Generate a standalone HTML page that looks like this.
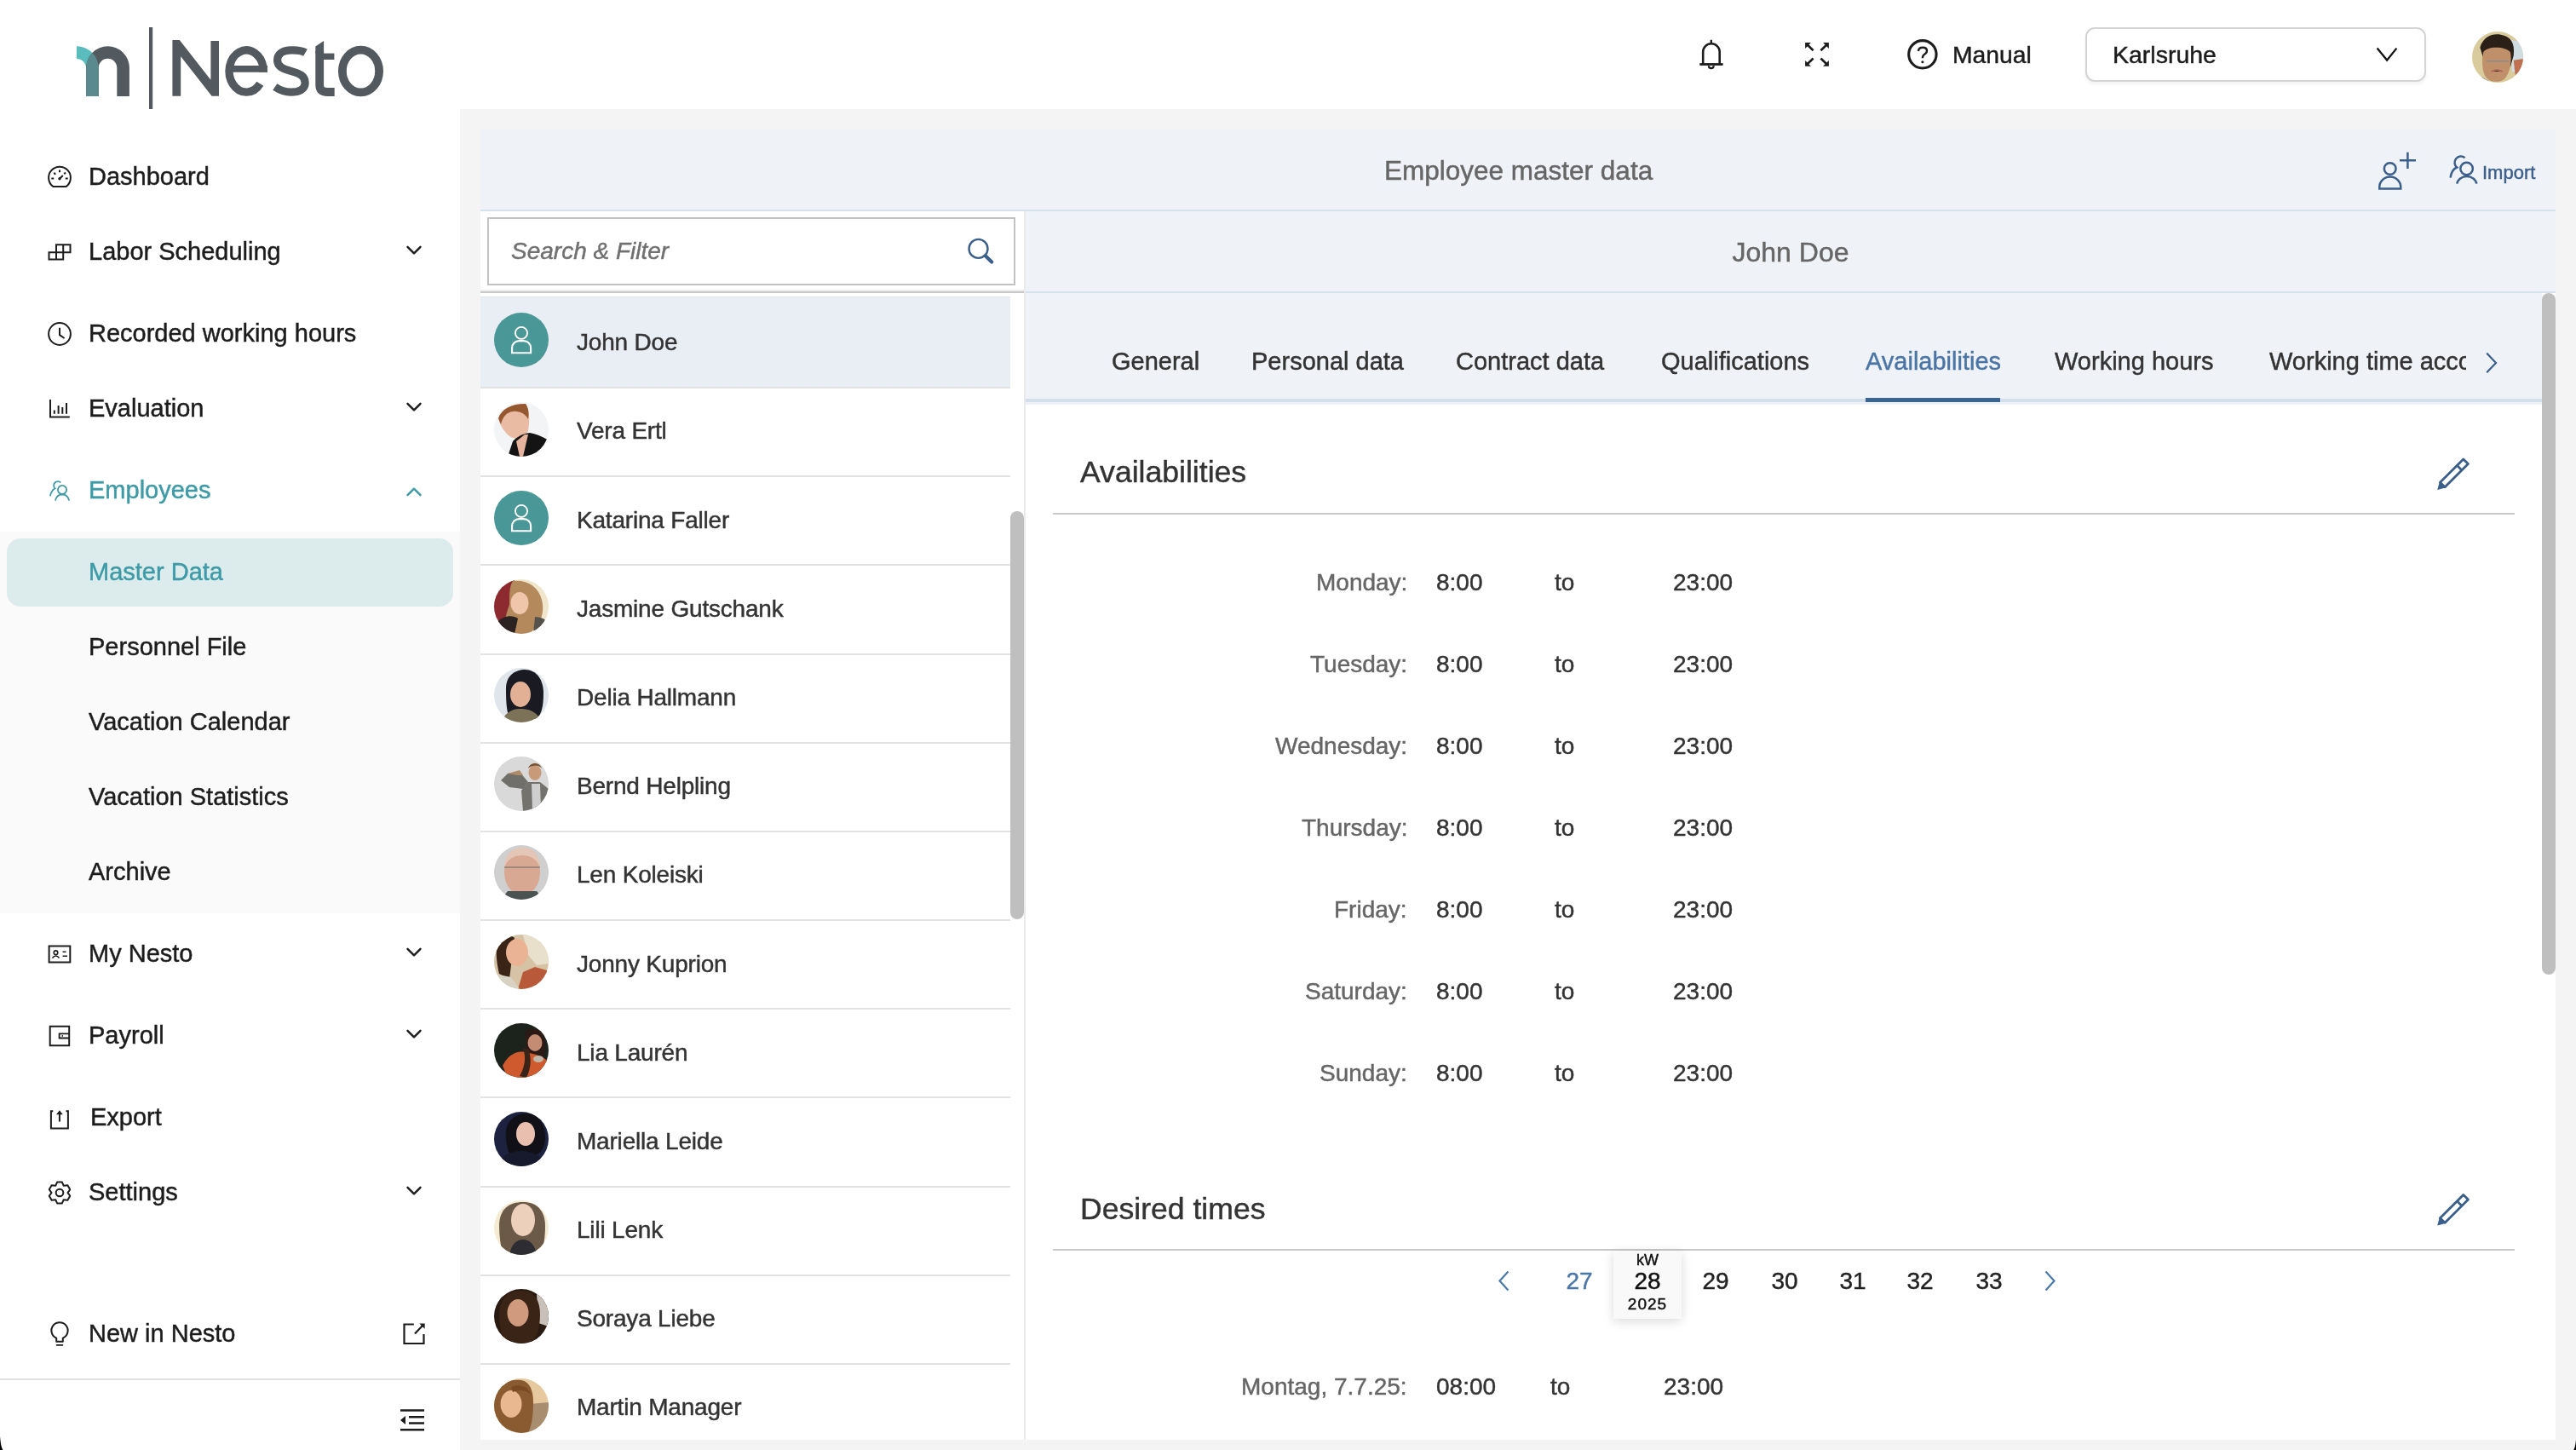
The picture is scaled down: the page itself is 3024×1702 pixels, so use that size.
<!DOCTYPE html>
<html><head><meta charset="utf-8"><title>Nesto</title>
<style>
html,body{margin:0;padding:0;}
body{width:3024px;height:1702px;position:relative;overflow:hidden;background:#fff;font-family:"Liberation Sans",sans-serif;}
.t{position:absolute;white-space:nowrap;will-change:transform;-webkit-text-stroke:0.45px currentColor;}
.r{position:absolute;}
svg.r{overflow:visible;}
</style></head><body>
<div class="r" style="left:540px;top:128px;width:2484px;height:1574px;background:#f4f4f4;"></div>
<div class="r" style="left:564px;top:152px;width:2436px;height:1538px;background:#ffffff;"></div>
<div class="r" style="left:564px;top:152px;width:2436px;height:94px;background:#eff2f7;"></div>
<div class="r" style="left:564px;top:246px;width:2436px;height:2px;background:#d6e1ee;"></div>
<div class="r" style="left:1204px;top:248px;width:1796px;height:94px;background:#eff2f7;"></div>
<div class="r" style="left:1204px;top:342px;width:1796px;height:2px;background:#d6e1ee;"></div>
<div class="r" style="left:1204px;top:344px;width:1780px;height:124px;background:#eff2f7;"></div>
<div class="r" style="left:1204px;top:468px;width:1780px;height:4px;background:#d4dfec;"></div>
<div class="r" style="left:1204px;top:472px;width:1780px;height:3px;background:#eef2f7;"></div>
<div class="r" style="left:1202px;top:248px;width:2px;height:1442px;background:#eaeaea;"></div>
<div class="r" style="left:0px;top:624px;width:540px;height:448px;background:#fafafa;"></div>
<div class="r" style="left:8px;top:632px;width:524px;height:80px;background:#dcecec;border-radius:16px;"></div>
<div class="r" style="left:0px;top:1618px;width:540px;height:2px;background:#e2e2e2;"></div>
<svg class="r" style="left:0px;top:0px;" width="540" height="128" viewBox="0 0 540 128">
<defs><clipPath id="nclip"><path d="M101.1 112.9V79.6A25.4 25.4 0 0 1 151.9 79.6V112.9H137.3V79.6A10.8 10.8 0 0 0 115.7 79.6V112.9Z"/></clipPath></defs>
<path fill="#5bbcbd" d="M89.9 54.2A25.8 25.8 0 0 1 115.7 80V112.9H101.1V80A11.2 11.2 0 0 0 89.9 68.9Z"/>
<path fill="#535a5f" d="M101.1 112.9V79.6A25.4 25.4 0 0 1 151.9 79.6V112.9H137.3V79.6A10.8 10.8 0 0 0 115.7 79.6V112.9Z"/>
<path fill="#5a8a8e" clip-path="url(#nclip)" d="M89.9 54.2A25.8 25.8 0 0 1 115.7 80V112.9H101.1V80A11.2 11.2 0 0 0 89.9 68.9Z"/>
<rect x="175" y="32" width="4.2" height="96" fill="#535a5f"/>
</svg>
<svg class="r" style="left:0px;top:0px;" width="540" height="128" viewBox="0 0 540 128"><path fill="#535a5f" d="M202.4 112.8V47.1H210.8L247.4 93.8V47.9H257V112.8H248.6L212.2 66.3V112.8Z"/><path fill="none" stroke="#535a5f" stroke-width="9.4" d="M309 79.5A20.1 24.6 0 1 0 305.3 98.2"/><path fill="none" stroke="#535a5f" stroke-width="7.8" d="M269 80.8H313.8"/><path fill="#535a5f" d="M309 76.9H313.8V84.7H304Z"/><path fill="none" stroke="#535a5f" stroke-width="9.2" d="M358.5 61.8C353 58.5 347 58.8 342 58.8C332 58.8 325.6 63.5 325.6 70.8C325.6 78.5 333 81.2 342 83.6C351.5 86.1 358.2 89.2 358.2 97.2C358.2 104.8 351 108.2 341.5 108.2C334.5 108.2 328.5 105.8 322.8 102"/><path fill="#535a5f" d="M370.3 54.6L380.1 48V62.6H370.3Z"/><path fill="none" stroke="#535a5f" stroke-width="9.8" d="M375.2 60V99.5C375.2 105.8 378.6 108 384.5 108H392.7"/><path fill="none" stroke="#535a5f" stroke-width="7.4" d="M375 66.3H392.4"/><ellipse cx="423.5" cy="83.5" rx="21.6" ry="24.9" fill="none" stroke="#535a5f" stroke-width="9.8"/></svg>
<div class="t" style="left:104.00px;top:193.45px;font-size:29px;line-height:29px;color:#1c1c1c;">Dashboard</div>
<div class="t" style="left:104.00px;top:280.95px;font-size:29px;line-height:29px;color:#1c1c1c;">Labor Scheduling</div>
<div class="t" style="left:104.00px;top:377.45px;font-size:29px;line-height:29px;color:#1c1c1c;">Recorded working hours</div>
<div class="t" style="left:104.00px;top:465.45px;font-size:29px;line-height:29px;color:#1c1c1c;">Evaluation</div>
<div class="t" style="left:104.00px;top:561.45px;font-size:29px;line-height:29px;color:#3d9aa6;">Employees</div>
<div class="t" style="left:104.00px;top:657.45px;font-size:29px;line-height:29px;color:#3d9aa6;">Master Data</div>
<div class="t" style="left:104.00px;top:745.45px;font-size:29px;line-height:29px;color:#1c1c1c;">Personnel File</div>
<div class="t" style="left:104.00px;top:833.45px;font-size:29px;line-height:29px;color:#1c1c1c;">Vacation Calendar</div>
<div class="t" style="left:104.00px;top:921.45px;font-size:29px;line-height:29px;color:#1c1c1c;">Vacation Statistics</div>
<div class="t" style="left:104.00px;top:1009.45px;font-size:29px;line-height:29px;color:#1c1c1c;">Archive</div>
<div class="t" style="left:104.00px;top:1105.45px;font-size:29px;line-height:29px;color:#1c1c1c;">My Nesto</div>
<div class="t" style="left:104.00px;top:1201.45px;font-size:29px;line-height:29px;color:#1c1c1c;">Payroll</div>
<div class="t" style="left:105.50px;top:1297.45px;font-size:29px;line-height:29px;color:#1c1c1c;">Export</div>
<div class="t" style="left:104.00px;top:1385.25px;font-size:29px;line-height:29px;color:#1c1c1c;">Settings</div>
<div class="t" style="left:104.00px;top:1551.45px;font-size:29px;line-height:29px;color:#1c1c1c;">New in Nesto</div>
<svg class="r" style="left:477px;top:288px;" width="18" height="12" viewBox="0 0 18 12"><path d="M1.5 1.8L9 9.3L16.5 1.8" fill="none" stroke="#1c1c1c" stroke-width="2.4" stroke-linecap="round" stroke-linejoin="round"/></svg>
<svg class="r" style="left:477px;top:472px;" width="18" height="12" viewBox="0 0 18 12"><path d="M1.5 1.8L9 9.3L16.5 1.8" fill="none" stroke="#1c1c1c" stroke-width="2.4" stroke-linecap="round" stroke-linejoin="round"/></svg>
<svg class="r" style="left:477px;top:1112px;" width="18" height="12" viewBox="0 0 18 12"><path d="M1.5 1.8L9 9.3L16.5 1.8" fill="none" stroke="#1c1c1c" stroke-width="2.4" stroke-linecap="round" stroke-linejoin="round"/></svg>
<svg class="r" style="left:477px;top:1208px;" width="18" height="12" viewBox="0 0 18 12"><path d="M1.5 1.8L9 9.3L16.5 1.8" fill="none" stroke="#1c1c1c" stroke-width="2.4" stroke-linecap="round" stroke-linejoin="round"/></svg>
<svg class="r" style="left:477px;top:1392px;" width="18" height="12" viewBox="0 0 18 12"><path d="M1.5 1.8L9 9.3L16.5 1.8" fill="none" stroke="#1c1c1c" stroke-width="2.4" stroke-linecap="round" stroke-linejoin="round"/></svg>
<svg class="r" style="left:477px;top:571px;" width="18" height="12" viewBox="0 0 18 12"><path d="M1.5 10.2L9 2.7L16.5 10.2" fill="none" stroke="#3d9aa6" stroke-width="2.4" stroke-linecap="round" stroke-linejoin="round"/></svg>
<div class="t" style="left:2291.50px;top:50.24px;font-size:28.3px;line-height:28.3px;color:#1c1c1c;">Manual</div>
<div class="r" style="left:2448px;top:32px;width:400px;height:64px;background:#fff;box-sizing:border-box;border:2px solid #d4d4d4;border-radius:11px;box-shadow:0 3px 4px rgba(0,0,0,0.05);"></div>
<div class="t" style="left:2480.00px;top:50.47px;font-size:28.5px;line-height:28.5px;color:#1c1c1c;">Karlsruhe</div>
<div class="t" style="left:1625.00px;top:184.93px;font-size:31.5px;line-height:31.5px;color:#666;">Employee master data</div>
<div class="t" style="left:2914.00px;top:192.07px;font-size:22px;line-height:22px;color:#3b5f8b;">Import</div>
<div class="r" style="left:572px;top:255px;width:620px;height:80px;background:#fff;box-sizing:border-box;border:2.5px solid #c2c2c2;"></div>
<div class="t" style="left:600.00px;top:281.29px;font-size:28px;line-height:28px;color:#707070;font-style:italic;">Search &amp; Filter</div>
<div class="r" style="left:564px;top:340px;width:638px;height:2px;background:#ececec;"></div>
<div class="r" style="left:564px;top:342px;width:638px;height:2px;background:#c8c8c8;"></div>
<div class="r" style="left:564px;top:348px;width:622px;height:1px;background:#e6e6e6;"></div>
<div class="t" style="left:1102.00px;width:2000px;text-align:center;top:280.41px;font-size:32px;line-height:32px;color:#666;">John Doe</div>
<div class="r" style="left:1204px;top:380px;width:1691px;height:80px;overflow:hidden;">
<div class="t" style="left:100.50px;top:29.95px;font-size:29px;line-height:29px;color:#333;white-space:nowrap;">General</div>
<div class="t" style="left:264.50px;top:29.95px;font-size:29px;line-height:29px;color:#333;white-space:nowrap;">Personal data</div>
<div class="t" style="left:504.50px;top:29.95px;font-size:29px;line-height:29px;color:#333;white-space:nowrap;">Contract data</div>
<div class="t" style="left:746.00px;top:29.95px;font-size:29px;line-height:29px;color:#333;white-space:nowrap;">Qualifications</div>
<div class="t" style="left:985.50px;top:29.95px;font-size:29px;line-height:29px;color:#4a75a5;white-space:nowrap;">Availabilities</div>
<div class="t" style="left:1208.10px;top:29.95px;font-size:29px;line-height:29px;color:#333;white-space:nowrap;">Working hours</div>
<div class="t" style="left:1459.50px;top:29.95px;font-size:29px;line-height:29px;color:#333;white-space:nowrap;">Working time accounts</div>
</div>
<div class="r" style="left:2190px;top:467px;width:158px;height:5px;background:#3b6591;"></div>
<div class="r" style="left:564px;top:349px;width:622px;height:105px;background:#e9eef5;"></div>
<div class="r" style="left:564px;top:454px;width:622px;height:2px;background:#e2e2e2;"></div>
<div class="t" style="left:676.50px;top:388.29px;font-size:28px;line-height:28px;color:#333;letter-spacing:-0.2px;">John Doe</div>
<div class="r" style="left:564px;top:558px;width:622px;height:2px;background:#e2e2e2;"></div>
<div class="t" style="left:676.50px;top:492.47px;font-size:28px;line-height:28px;color:#333;letter-spacing:-0.2px;">Vera Ertl</div>
<div class="r" style="left:564px;top:662px;width:622px;height:2px;background:#e2e2e2;"></div>
<div class="t" style="left:676.50px;top:596.65px;font-size:28px;line-height:28px;color:#333;letter-spacing:-0.2px;">Katarina Faller</div>
<div class="r" style="left:564px;top:767px;width:622px;height:2px;background:#e2e2e2;"></div>
<div class="t" style="left:676.50px;top:700.83px;font-size:28px;line-height:28px;color:#333;letter-spacing:-0.2px;">Jasmine Gutschank</div>
<div class="r" style="left:564px;top:871px;width:622px;height:2px;background:#e2e2e2;"></div>
<div class="t" style="left:676.50px;top:805.01px;font-size:28px;line-height:28px;color:#333;letter-spacing:-0.2px;">Delia Hallmann</div>
<div class="r" style="left:564px;top:975px;width:622px;height:2px;background:#e2e2e2;"></div>
<div class="t" style="left:676.50px;top:909.19px;font-size:28px;line-height:28px;color:#333;letter-spacing:-0.2px;">Bernd Helpling</div>
<div class="r" style="left:564px;top:1079px;width:622px;height:2px;background:#e2e2e2;"></div>
<div class="t" style="left:676.50px;top:1013.37px;font-size:28px;line-height:28px;color:#333;letter-spacing:-0.2px;">Len Koleiski</div>
<div class="r" style="left:564px;top:1183px;width:622px;height:2px;background:#e2e2e2;"></div>
<div class="t" style="left:676.50px;top:1117.55px;font-size:28px;line-height:28px;color:#333;letter-spacing:-0.2px;">Jonny Kuprion</div>
<div class="r" style="left:564px;top:1287px;width:622px;height:2px;background:#e2e2e2;"></div>
<div class="t" style="left:676.50px;top:1221.73px;font-size:28px;line-height:28px;color:#333;letter-spacing:-0.2px;">Lia Laur&eacute;n</div>
<div class="r" style="left:564px;top:1392px;width:622px;height:2px;background:#e2e2e2;"></div>
<div class="t" style="left:676.50px;top:1325.91px;font-size:28px;line-height:28px;color:#333;letter-spacing:-0.2px;">Mariella Leide</div>
<div class="r" style="left:564px;top:1496px;width:622px;height:2px;background:#e2e2e2;"></div>
<div class="t" style="left:676.50px;top:1430.09px;font-size:28px;line-height:28px;color:#333;letter-spacing:-0.2px;">Lili Lenk</div>
<div class="r" style="left:564px;top:1600px;width:622px;height:2px;background:#e2e2e2;"></div>
<div class="t" style="left:676.50px;top:1534.27px;font-size:28px;line-height:28px;color:#333;letter-spacing:-0.2px;">Soraya Liebe</div>
<div class="t" style="left:676.50px;top:1638.45px;font-size:28px;line-height:28px;color:#333;letter-spacing:-0.2px;">Martin Manager</div>
<div class="r" style="left:1186px;top:600px;width:16px;height:479px;background:#bfbfbf;border-radius:8px;"></div>
<div class="t" style="left:1267.50px;top:537.36px;font-size:35.6px;line-height:35.6px;color:#333;">Availabilities</div>
<div class="r" style="left:1236px;top:602px;width:1716px;height:2px;background:#c8c8c8;"></div>
<div class="t" style="right:1372.00px;top:669.69px;font-size:28px;line-height:28px;color:#666;">Monday:</div>
<div class="t" style="left:1685.50px;top:669.69px;font-size:28px;line-height:28px;color:#333;">8:00</div>
<div class="t" style="left:1824.70px;top:669.69px;font-size:28px;line-height:28px;color:#333;">to</div>
<div class="t" style="left:1963.50px;top:669.69px;font-size:28px;line-height:28px;color:#333;">23:00</div>
<div class="t" style="right:1372.00px;top:765.69px;font-size:28px;line-height:28px;color:#666;">Tuesday:</div>
<div class="t" style="left:1685.50px;top:765.69px;font-size:28px;line-height:28px;color:#333;">8:00</div>
<div class="t" style="left:1824.70px;top:765.69px;font-size:28px;line-height:28px;color:#333;">to</div>
<div class="t" style="left:1963.50px;top:765.69px;font-size:28px;line-height:28px;color:#333;">23:00</div>
<div class="t" style="right:1372.00px;top:861.69px;font-size:28px;line-height:28px;color:#666;">Wednesday:</div>
<div class="t" style="left:1685.50px;top:861.69px;font-size:28px;line-height:28px;color:#333;">8:00</div>
<div class="t" style="left:1824.70px;top:861.69px;font-size:28px;line-height:28px;color:#333;">to</div>
<div class="t" style="left:1963.50px;top:861.69px;font-size:28px;line-height:28px;color:#333;">23:00</div>
<div class="t" style="right:1372.00px;top:957.69px;font-size:28px;line-height:28px;color:#666;">Thursday:</div>
<div class="t" style="left:1685.50px;top:957.69px;font-size:28px;line-height:28px;color:#333;">8:00</div>
<div class="t" style="left:1824.70px;top:957.69px;font-size:28px;line-height:28px;color:#333;">to</div>
<div class="t" style="left:1963.50px;top:957.69px;font-size:28px;line-height:28px;color:#333;">23:00</div>
<div class="t" style="right:1372.00px;top:1053.69px;font-size:28px;line-height:28px;color:#666;">Friday:</div>
<div class="t" style="left:1685.50px;top:1053.69px;font-size:28px;line-height:28px;color:#333;">8:00</div>
<div class="t" style="left:1824.70px;top:1053.69px;font-size:28px;line-height:28px;color:#333;">to</div>
<div class="t" style="left:1963.50px;top:1053.69px;font-size:28px;line-height:28px;color:#333;">23:00</div>
<div class="t" style="right:1372.00px;top:1149.69px;font-size:28px;line-height:28px;color:#666;">Saturday:</div>
<div class="t" style="left:1685.50px;top:1149.69px;font-size:28px;line-height:28px;color:#333;">8:00</div>
<div class="t" style="left:1824.70px;top:1149.69px;font-size:28px;line-height:28px;color:#333;">to</div>
<div class="t" style="left:1963.50px;top:1149.69px;font-size:28px;line-height:28px;color:#333;">23:00</div>
<div class="t" style="right:1372.00px;top:1245.69px;font-size:28px;line-height:28px;color:#666;">Sunday:</div>
<div class="t" style="left:1685.50px;top:1245.69px;font-size:28px;line-height:28px;color:#333;">8:00</div>
<div class="t" style="left:1824.70px;top:1245.69px;font-size:28px;line-height:28px;color:#333;">to</div>
<div class="t" style="left:1963.50px;top:1245.69px;font-size:28px;line-height:28px;color:#333;">23:00</div>
<div class="t" style="left:1267.50px;top:1401.86px;font-size:35.6px;line-height:35.6px;color:#333;">Desired times</div>
<div class="r" style="left:1236px;top:1466px;width:1716px;height:2px;background:#c8c8c8;"></div>
<div class="r" style="left:1894px;top:1468px;width:80px;height:80px;background:#f9f9f9;box-shadow:0 3px 12px rgba(0,0,0,0.15);"></div>
<div class="t" style="left:933.80px;width:2000px;text-align:center;top:1470.36px;font-size:18px;line-height:18px;color:#111;">kW</div>
<div class="t" style="left:934.00px;width:2000px;text-align:center;top:1489.89px;font-size:28px;line-height:28px;color:#111;">28</div>
<div class="t" style="left:934.00px;width:2000px;text-align:center;top:1520.91px;font-size:19px;line-height:19px;color:#111;letter-spacing:1px;">2025</div>
<div class="t" style="left:854.40px;width:2000px;text-align:center;top:1490.29px;font-size:28px;line-height:28px;color:#4a78a8;">27</div>
<div class="t" style="left:1014.00px;width:2000px;text-align:center;top:1490.29px;font-size:28px;line-height:28px;color:#222;">29</div>
<div class="t" style="left:1094.50px;width:2000px;text-align:center;top:1490.29px;font-size:28px;line-height:28px;color:#222;">30</div>
<div class="t" style="left:1174.50px;width:2000px;text-align:center;top:1490.29px;font-size:28px;line-height:28px;color:#222;">31</div>
<div class="t" style="left:1253.50px;width:2000px;text-align:center;top:1490.29px;font-size:28px;line-height:28px;color:#222;">32</div>
<div class="t" style="left:1334.50px;width:2000px;text-align:center;top:1490.29px;font-size:28px;line-height:28px;color:#222;">33</div>
<svg class="r" style="left:1757px;top:1490px;" width="17" height="27" viewBox="0 0 17 27"><path d="M13.5 2.5L3.5 13.5L13.5 24.5" fill="none" stroke="#4a78a8" stroke-width="2.2"/></svg>
<svg class="r" style="left:2398px;top:1490px;" width="17" height="27" viewBox="0 0 17 27"><path d="M3.5 2.5L13.5 13.5L3.5 24.5" fill="none" stroke="#4a78a8" stroke-width="2.2"/></svg>
<div class="t" style="right:1372.00px;top:1613.99px;font-size:28px;line-height:28px;color:#666;">Montag, 7.7.25:</div>
<div class="t" style="left:1685.50px;top:1613.99px;font-size:28px;line-height:28px;color:#333;">08:00</div>
<div class="t" style="left:1819.50px;top:1613.99px;font-size:28px;line-height:28px;color:#333;">to</div>
<div class="t" style="left:1953.00px;top:1613.99px;font-size:28px;line-height:28px;color:#333;">23:00</div>
<div class="r" style="left:2984px;top:344px;width:16px;height:1346px;background:#ffffff;"></div>
<div class="r" style="left:2984px;top:344px;width:16px;height:800px;background:#bfbfbf;border-radius:8px;"></div>
<svg class="r" style="left:0;top:0;" width="3024" height="1702" viewBox="0 0 3024 1702"><path d="M62.3 218.9 A12.9 12.9 0 1 1 77.7 218.9 Z" fill="none" stroke="#1c1c1c" stroke-width="2.0" stroke-linejoin="round"/><path d="M70 199.5V202.3 M60.3 209.5H63.2 M76.8 209.5H79.7 M63.3 202.8L65.2 204.7 M77 202.5L75.3 204.2 M70 209.8L73.8 206" fill="none" stroke="#1c1c1c" stroke-width="2.0" /><circle cx="70" cy="209.8" r="1.7" fill="#1c1c1c"/><path d="M66 287.3H82.5V296.3H66Z M74.2 287.3V304.5 M57.5 296.3H74.2V304.5H57.5Z M66 296.3V304.5" fill="none" stroke="#1c1c1c" stroke-width="2.0" /><circle cx="70" cy="392" r="12.9" fill="none" stroke="#1c1c1c" stroke-width="2"/><path d="M70 384.8V393.2L75.6 397" fill="none" stroke="#1c1c1c" stroke-width="2.0" /><path d="M59 469V489.6H81.8" fill="none" stroke="#1c1c1c" stroke-width="2.0" /><path d="M63.8 481.5V485.8 M68.6 476V485.8 M73.3 478V485.8 M78 473V485.8" fill="none" stroke="#1c1c1c" stroke-width="2.0" /><path d="M71.3 566.4 A4.7 4.7 0 1 0 64.6 573.3 Q60.4 575.8 58.9 582.2" fill="none" stroke="#3d9aa6" stroke-width="1.8" /><circle cx="73" cy="574.9" r="5.1" fill="none" stroke="#3d9aa6" stroke-width="1.8"/><path d="M64.9 587.6 Q66.5 580.5 73 580.3 Q79.5 580.5 81.2 587.6" fill="none" stroke="#3d9aa6" stroke-width="1.8" /><path d="M57.6 1110.4H82.3V1129.4H57.6Z" fill="none" stroke="#1c1c1c" stroke-width="2.0" /><circle cx="65.5" cy="1118.2" r="2.3" fill="none" stroke="#1c1c1c" stroke-width="1.6"/><path d="M61.4 1124.6 Q65.5 1119.5 69.6 1124.6" fill="none" stroke="#1c1c1c" stroke-width="1.6" /><path d="M73.6 1117.2H77.5 M73.6 1122.2H79" fill="none" stroke="#1c1c1c" stroke-width="1.6" /><path d="M58.7 1204.7H81.2V1227.3H58.7Z" fill="none" stroke="#1c1c1c" stroke-width="2.0" /><path d="M81.2 1213.3H69.6V1218.5H81.2" fill="none" stroke="#1c1c1c" stroke-width="1.8" /><circle cx="73.3" cy="1215.9" r="0.9" fill="#1c1c1c"/><path d="M62.3 1304.2H59.9V1324.4H79.9V1304.2H77.5" fill="none" stroke="#1c1c1c" stroke-width="2.0" /><path d="M69.9 1316.6V1305.5" fill="none" stroke="#1c1c1c" stroke-width="2.0" /><path d="M66 1308.3L69.9 1303.2L73.8 1308.3Z" fill="#1c1c1c"/><path d="M65.35 1391.60 L67.12 1387.53 L72.88 1387.53 L74.65 1391.60 L74.94 1391.77 L79.36 1391.27 L82.24 1396.26 L79.60 1399.83 L79.60 1400.17 L82.24 1403.74 L79.36 1408.73 L74.94 1408.23 L74.65 1408.40 L72.88 1412.47 L67.12 1412.47 L65.35 1408.40 L65.06 1408.23 L60.64 1408.73 L57.76 1403.74 L60.40 1400.17 L60.40 1399.83 L57.76 1396.26 L60.64 1391.27 L65.06 1391.77Z" fill="none" stroke="#1c1c1c" stroke-width="2.0" stroke-linejoin="round"/><circle cx="70" cy="1400" r="4.3" fill="none" stroke="#1c1c1c" stroke-width="2"/><path d="M66.2 1574.7V1570.6 A9.6 9.6 0 1 1 73.8 1570.6 V1574.7Z" fill="none" stroke="#1c1c1c" stroke-width="2.0" stroke-linejoin="round"/><path d="M66.6 1578.8H73.4" fill="none" stroke="#1c1c1c" stroke-width="1.8" stroke-linecap="round"/><path d="M485.8 1554.5H474.5V1577H497.5V1566" fill="none" stroke="#1c1c1c" stroke-width="2.2" /><path d="M487 1565.5L496 1556" fill="none" stroke="#1c1c1c" stroke-width="2.2" /><path d="M492.3 1553.4H498.6V1559.7Z" fill="#1c1c1c"/><path d="M470 1655.5H498 M480 1663.3H498 M480 1670.5H498 M470 1678.3H498" fill="none" stroke="#1c1c1c" stroke-width="2.4" /><path d="M470 1667L476 1662V1672Z" fill="#1c1c1c"/><path d="M1999.2 75V61 A9.75 9.75 0 0 1 2018.7 61V75" fill="none" stroke="#1c1c1c" stroke-width="2.6" /><path d="M1995.3 75.5H2022.6" fill="none" stroke="#1c1c1c" stroke-width="2.8" /><path d="M2008.8 46.8V50.5" fill="none" stroke="#1c1c1c" stroke-width="2.4" /><path d="M2005.9 77.2A2.9 2.9 0 0 0 2011.7 77.2" fill="none" stroke="#1c1c1c" stroke-width="2.3" /><path d="M2121.6 52.5L2128.6 59.3" fill="none" stroke="#1c1c1c" stroke-width="2.6" /><path d="M2119.1 50H2125.9L2119.1 56.9Z" fill="#1c1c1c"/><path d="M2144.4 52.5L2137.4 59.3" fill="none" stroke="#1c1c1c" stroke-width="2.6" /><path d="M2146.9 50H2140.1L2146.9 56.9Z" fill="#1c1c1c"/><path d="M2121.6 75.3L2128.6 68.5" fill="none" stroke="#1c1c1c" stroke-width="2.6" /><path d="M2119.1 77.8H2125.9L2119.1 70.89999999999999Z" fill="#1c1c1c"/><path d="M2144.4 75.3L2137.4 68.5" fill="none" stroke="#1c1c1c" stroke-width="2.6" /><path d="M2146.9 77.8H2140.1L2146.9 70.89999999999999Z" fill="#1c1c1c"/><circle cx="2256.9" cy="63.8" r="16.2" fill="none" stroke="#1c1c1c" stroke-width="3.1"/><path d="M2251.9 60 Q2252.4 55.7 2257.2 55.7 Q2262 55.7 2262 59.6 Q2262 62.4 2259.2 63.8 Q2256.9 65 2256.9 68.3" fill="none" stroke="#1c1c1c" stroke-width="2.4" /><circle cx="2256.9" cy="72.8" r="1.55" fill="#1c1c1c"/><path d="M2790.6 56.6L2802.1 70.6L2813.4 56.6" fill="none" stroke="#111" stroke-width="2.3" /><circle cx="1148.5" cy="291.9" r="11" fill="none" stroke="#3b5f8b" stroke-width="2.4"/><path d="M1156.8 300.2L1164.2 307.6" fill="none" stroke="#3b5f8b" stroke-width="4.2" stroke-linecap="round"/><circle cx="2805.7" cy="198" r="6.85" fill="none" stroke="#3b5f8b" stroke-width="2.5"/><path d="M2793.25 221.5V219.6A12.5 12 0 0 1 2818.25 219.6V221.5Z" fill="none" stroke="#3b5f8b" stroke-width="2.5" /><path d="M2826.4 178.7V198 M2817 188.2H2836" fill="none" stroke="#3b5f8b" stroke-width="2.5" /><circle cx="2895.6" cy="198.1" r="7.25" fill="none" stroke="#3b5f8b" stroke-width="2.5"/><path d="M2884.3 215.6 A11.6 10 0 0 1 2907.3 215.6" fill="none" stroke="#3b5f8b" stroke-width="2.5" /><path d="M2893.5 185.2 A6.6 6.6 0 1 0 2884.2 196.5 Q2878 199 2876.6 208.6" fill="none" stroke="#3b5f8b" stroke-width="2.5" /><g transform="translate(2861.2 575.1) rotate(-45)"><path d="M8.6 -4.0H47.2V4.0H8.6Z" fill="none" stroke="#3b5f8b" stroke-width="2.8" stroke-linejoin="round"/><path d="M0 0L9.4 -5.4V5.4Z" fill="#3b5f8b"/><path d="M36.7 -4.0V4.0" stroke="#3b5f8b" stroke-width="2.8"/></g><g transform="translate(2861.2 1438.6) rotate(-45)"><path d="M8.6 -4.0H47.2V4.0H8.6Z" fill="none" stroke="#3b5f8b" stroke-width="2.8" stroke-linejoin="round"/><path d="M0 0L9.4 -5.4V5.4Z" fill="#3b5f8b"/><path d="M36.7 -4.0V4.0" stroke="#3b5f8b" stroke-width="2.8"/></g><path d="M2919.2 414.6L2930 426L2919.2 437.3" fill="none" stroke="#3b5f8b" stroke-width="2.2" /></svg>
<svg class="r" style="left:580px;top:367px;" width="64" height="64" viewBox="0 0 64 64"><defs><clipPath id="cp0"><circle cx="32" cy="32" r="32"/></clipPath></defs><g clip-path="url(#cp0)"><rect width="64" height="64" fill="#4a9797"/><circle cx="32" cy="23.9" r="7.05" fill="none" stroke="#fff" stroke-width="1.9"/><path d="M21.1 47.2V41.4A8.3 8.3 0 0 1 29.4 33.1H34.8A8.3 8.3 0 0 1 43.1 41.4V47.2Z" fill="none" stroke="#fff" stroke-width="2.1"/></g></svg>
<svg class="r" style="left:580px;top:472px;" width="64" height="64" viewBox="0 0 64 64"><defs><clipPath id="cp1"><circle cx="32" cy="32" r="32"/></clipPath></defs><g clip-path="url(#cp1)"><rect width="64" height="64" fill="#f3f4f5"/><path d="M5 19C9 8 20 2 37 2C42 9 42 22 40 34L36 40C30 44 20 44 14 36C9 30 6 25 5 19Z" fill="#eabba3"/><path d="M5 19C9 8 20 2 37 2C41 8 41 14 40 20C37 14 30 10 22 11C14 12 10 18 8 26Z" fill="#94572f"/><path d="M22 46C26 41 34 37 42 36C52 38 60 42 65 46V64H16Z" fill="#141414"/><path d="M26 46L36 38L40 38L34 64H30Z" fill="#e6b49e"/></g></svg>
<svg class="r" style="left:580px;top:576px;" width="64" height="64" viewBox="0 0 64 64"><defs><clipPath id="cp2"><circle cx="32" cy="32" r="32"/></clipPath></defs><g clip-path="url(#cp2)"><rect width="64" height="64" fill="#4a9797"/><circle cx="32" cy="23.9" r="7.05" fill="none" stroke="#fff" stroke-width="1.9"/><path d="M21.1 47.2V41.4A8.3 8.3 0 0 1 29.4 33.1H34.8A8.3 8.3 0 0 1 43.1 41.4V47.2Z" fill="none" stroke="#fff" stroke-width="2.1"/></g></svg>
<svg class="r" style="left:580px;top:680px;" width="64" height="64" viewBox="0 0 64 64"><defs><clipPath id="cp3"><circle cx="32" cy="32" r="32"/></clipPath></defs><g clip-path="url(#cp3)"><rect width="64" height="64" fill="#efe6cc"/><rect width="24" height="58" fill="#8d2a30"/><path d="M22 2C38 0 52 8 56 24C60 40 54 56 40 64H16C10 56 14 40 18 30C18 18 18 8 22 2Z" fill="#b48a5c"/><ellipse cx="30" cy="28" rx="10.5" ry="13" fill="#f0c6aa"/><path d="M4 50C12 42 22 42 28 46L24 64H6Z" fill="#2b2222"/><path d="M48 44C56 44 62 48 64 52V64H46Z" fill="#55524c"/></g></svg>
<svg class="r" style="left:580px;top:784px;" width="64" height="64" viewBox="0 0 64 64"><defs><clipPath id="cp4"><circle cx="32" cy="32" r="32"/></clipPath></defs><g clip-path="url(#cp4)"><rect width="64" height="64" fill="#dfe5eb"/><path d="M14 24C14 8 26 2 36 2C50 2 58 14 58 30C58 44 56 54 50 60H18C14 48 14 36 14 24Z" fill="#1a1a22"/><ellipse cx="31" cy="31" rx="12" ry="15" fill="#e2b094"/><path d="M8 64C12 54 20 48 30 48C40 48 50 50 56 64Z" fill="#7c7257"/></g></svg>
<svg class="r" style="left:580px;top:888px;" width="64" height="64" viewBox="0 0 64 64"><defs><clipPath id="cp5"><circle cx="32" cy="32" r="32"/></clipPath></defs><g clip-path="url(#cp5)"><rect width="64" height="64" fill="#d9d9d9"/><path d="M34 64L32 40L40 30L54 30L64 38V64Z" fill="#74726c"/><path d="M44 32L54 32L55 64H45Z" fill="#cfcfcf"/><path d="M8 28L16 20L30 18L40 30L34 38L18 36Z" fill="#706f69"/><path d="M16 20L30 16L34 22L28 22Z" fill="#b08a6a"/><ellipse cx="48" cy="19" rx="7.5" ry="9" fill="#c89a7a"/><path d="M40 14C42 6 54 6 56 14L54 12C50 10 44 10 40 14Z" fill="#7a5535"/></g></svg>
<svg class="r" style="left:580px;top:992px;" width="64" height="64" viewBox="0 0 64 64"><defs><clipPath id="cp6"><circle cx="32" cy="32" r="32"/></clipPath></defs><g clip-path="url(#cp6)"><rect width="64" height="64" fill="#cfcfcf"/><ellipse cx="33" cy="32" rx="21" ry="27" fill="#d8a892"/><path d="M12 26C12 10 22 3 34 3C46 3 54 12 54 26C50 16 42 12 33 12C24 12 16 16 12 26Z" fill="#e4c6b6"/><path d="M12 26H54" stroke="#6b6b6b" stroke-width="1.2"/><path d="M8 64L16 54L50 54L58 64Z" fill="#4a5252"/></g></svg>
<svg class="r" style="left:580px;top:1097px;" width="64" height="64" viewBox="0 0 64 64"><defs><clipPath id="cp7"><circle cx="32" cy="32" r="32"/></clipPath></defs><g clip-path="url(#cp7)"><rect width="64" height="64" fill="#d6c3a6"/><path d="M34 0H64V34L50 36L40 24Z" fill="#e9e0cb"/><path d="M4 6C10 0 20 0 24 4L18 52L6 46C2 30 2 16 4 6Z" fill="#3a2416"/><ellipse cx="27" cy="21" rx="13" ry="16" fill="#e9b394"/><path d="M28 64L34 44L48 38L62 42L64 64Z" fill="#b85a3a"/><path d="M0 46L20 50L30 64H0Z" fill="#d8d2c2"/></g></svg>
<svg class="r" style="left:580px;top:1201px;" width="64" height="64" viewBox="0 0 64 64"><defs><clipPath id="cp8"><circle cx="32" cy="32" r="32"/></clipPath></defs><g clip-path="url(#cp8)"><rect width="64" height="64" fill="#1c231c"/><path d="M36 10C42 4 54 6 58 14C62 24 60 36 56 44L40 56Z" fill="#2b1a16"/><ellipse cx="48" cy="23" rx="8.5" ry="10" fill="#c48c72"/><path d="M10 50C16 38 26 32 36 34C46 36 58 38 64 46V64H16Z" fill="#cf5a2e"/><path d="M34 30C38 40 36 52 30 62L38 64C44 52 44 40 40 30Z" fill="#3a2418"/><ellipse cx="52" cy="42" rx="6" ry="4" fill="#c0b8a8"/></g></svg>
<svg class="r" style="left:580px;top:1305px;" width="64" height="64" viewBox="0 0 64 64"><defs><clipPath id="cp9"><circle cx="32" cy="32" r="32"/></clipPath></defs><g clip-path="url(#cp9)"><rect width="64" height="64" fill="#1d2240"/><path d="M14 30C12 12 24 2 38 2C52 2 60 14 60 30C60 40 56 48 50 50H18C16 44 14 38 14 30Z" fill="#101016"/><ellipse cx="37" cy="26" rx="11" ry="14" fill="#e9bfb0"/><path d="M4 64C8 52 18 46 32 46C46 46 56 52 60 64Z" fill="#161a2c"/></g></svg>
<svg class="r" style="left:580px;top:1409px;" width="64" height="64" viewBox="0 0 64 64"><defs><clipPath id="cp10"><circle cx="32" cy="32" r="32"/></clipPath></defs><g clip-path="url(#cp10)"><rect width="64" height="64" fill="#f4ebd2"/><path d="M6 30C6 10 18 2 34 2C50 2 60 12 60 30C60 44 58 56 54 64H10C8 54 6 42 6 30Z" fill="#6b5a48"/><ellipse cx="34" cy="23" rx="14" ry="19" fill="#ecd0bc"/><path d="M18 64C20 52 26 46 34 46C42 46 48 52 50 64Z" fill="#2c2c32"/></g></svg>
<svg class="r" style="left:580px;top:1513px;" width="64" height="64" viewBox="0 0 64 64"><defs><clipPath id="cp11"><circle cx="32" cy="32" r="32"/></clipPath></defs><g clip-path="url(#cp11)"><rect width="64" height="64" fill="#2a1b12"/><path d="M50 6L64 10V44L52 40Z" fill="#c9c1b9"/><path d="M6 30C6 12 16 2 32 2C46 2 54 12 54 30C54 46 50 56 44 64H12C8 52 6 42 6 30Z" fill="#3a2416"/><ellipse cx="28" cy="28" rx="12.5" ry="16" fill="#cf9a7e"/></g></svg>
<svg class="r" style="left:580px;top:1618px;" width="64" height="64" viewBox="0 0 64 64"><defs><clipPath id="cp12"><circle cx="32" cy="32" r="32"/></clipPath></defs><g clip-path="url(#cp12)"><rect width="64" height="64" fill="#e7c9a0"/><path d="M42 30L64 28V64H40Z" fill="#a88e6e"/><path d="M0 20C4 6 18 0 32 2C42 4 46 14 46 28C46 44 44 56 40 64H0Z" fill="#8a5a30"/><ellipse cx="20" cy="30" rx="12.5" ry="16" fill="#e9b890"/><path d="M20 10C28 6 40 8 44 20C40 14 30 12 22 16Z" fill="#7a4a24"/></g></svg>
<svg class="r" style="left:2902px;top:37px;" width="60" height="60" viewBox="0 0 64 64"><defs><clipPath id="cu"><circle cx="32" cy="32" r="32"/></clipPath></defs><g clip-path="url(#cu)"><rect width="64" height="64" fill="#d9cb9c"/><path d="M48 10L64 14V52L50 50Z" fill="#cfdde0"/><path d="M52 36L64 34V52L54 54Z" fill="#c07050"/><path d="M0 50L24 64H0Z" fill="#111"/><path d="M10 20C14 6 26 2 36 4C48 6 54 14 52 30L48 44L16 40Z" fill="#2a2018"/><path d="M14 26C18 18 42 18 48 26C50 36 48 52 40 60C34 64 24 64 18 58C12 50 12 36 14 26Z" fill="#c0906a"/><path d="M18 37H46" stroke="#8a8a8a" stroke-width="1.6"/><path d="M24 50C28 48 34 48 38 50" stroke="#b06a5a" stroke-width="2"/></g></svg>
<svg class="r" style="left:0;top:0;" width="3024" height="1702" viewBox="0 0 3024 1702"><path d="M0 1686Q1 1699 3.5 1702H0Z" fill="#000"/><path d="M3024 1690Q3023 1700 3021 1702H3024Z" fill="#000"/></svg>
</body></html>
